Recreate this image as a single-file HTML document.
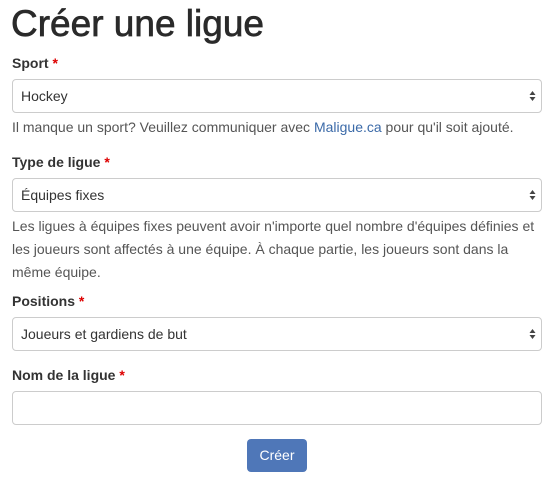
<!DOCTYPE html>
<html><head><meta charset="utf-8"><style>
body{margin:0;width:554px;height:483px;background:#fff;font-family:"Liberation Sans",Arial,sans-serif;color:#333;position:relative;overflow:hidden}
.a{position:absolute;white-space:nowrap}
h1{position:absolute;left:11px;top:2px;margin:0;font-size:37px;font-weight:500;color:#2a2a2a;line-height:44px;-webkit-text-stroke:0.7px #2a2a2a}
.l{font-weight:bold;font-size:14px}
.l span{color:#d00}
.s{position:absolute;left:12px;width:528px;height:32px;border:1px solid #ccc;border-radius:4px;background:#fff;font-size:14px;line-height:32px;box-sizing:content-box}
.s .t{position:absolute;left:8px;top:0}
.ar{position:absolute;right:5px;top:10px;width:7px;height:12px}
.h{font-size:14px;color:#555;line-height:23px}
.btn{position:absolute;left:247px;top:439px;width:60px;height:33px;background:#4f77b8;border-radius:4px;color:#fff;font-size:14px;line-height:33px;text-align:center}
</style></head><body>
<h1>Créer une ligue</h1>
<div class="a l" style="left:12px;top:55px">Sport <span>*</span></div>
<div class="s" style="top:79px"><span class="t">Hockey</span><svg class="ar" viewBox="0 0 7 12"><path d="M0.5 5L3.5 1L6.5 5Z M0.5 7L3.5 11L6.5 7Z" fill="#444"/></svg></div>
<div class="a h" style="left:12px;top:116px">Il manque un sport? Veuillez communiquer avec <span style="color:#3b6aa8">Maligue.ca</span> pour qu'il soit ajouté.</div>
<div class="a l" style="left:12px;top:154px">Type de ligue <span>*</span></div>
<div class="s" style="top:178px"><span class="t">Équipes fixes</span><svg class="ar" viewBox="0 0 7 12"><path d="M0.5 5L3.5 1L6.5 5Z M0.5 7L3.5 11L6.5 7Z" fill="#444"/></svg></div>
<div class="a h" style="left:12px;top:215px">Les ligues à équipes fixes peuvent avoir n'importe quel nombre d'équipes définies et<br>les joueurs sont affectés à une équipe. À chaque partie, les joueurs sont dans la<br>même équipe.</div>
<div class="a l" style="left:12px;top:293px">Positions <span>*</span></div>
<div class="s" style="top:317px"><span class="t">Joueurs et gardiens de but</span><svg class="ar" viewBox="0 0 7 12"><path d="M0.5 5L3.5 1L6.5 5Z M0.5 7L3.5 11L6.5 7Z" fill="#444"/></svg></div>
<div class="a l" style="left:12px;top:367px">Nom de la ligue <span>*</span></div>
<div class="s" style="top:391px"></div>
<div class="btn">Créer</div>
</body></html>
